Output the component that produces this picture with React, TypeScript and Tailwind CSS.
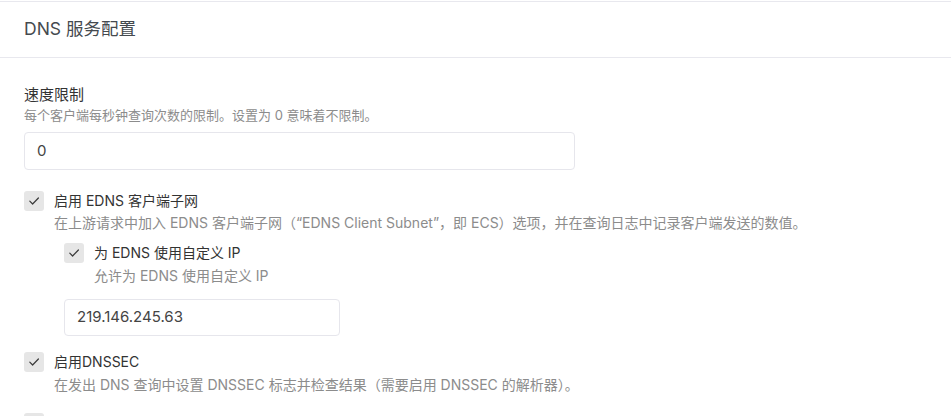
import React from "react";

const font = { fontFamily: 'Inter, "Noto Sans CJK SC", sans-serif' };

function Check() {
  return (
    <div className="flex h-5 w-5 shrink-0 items-center justify-center rounded-[3px] bg-[#e6e6e6]">
      <svg width="12" height="12" viewBox="0 0 12 12" fill="none">
        <path d="M1.8 6.2 L4.6 9 L10.4 3" stroke="#3a3a3a" strokeWidth="1.2" strokeLinecap="round" strokeLinejoin="round" />
      </svg>
    </div>
  );
}

function CheckRow({ label, desc, descMt }: { label: string; desc: string; descMt: string }) {
  return (
    <div className="flex gap-[10px]">
      <Check />
      <div className="flex flex-col">
        <div className="text-[14px] leading-5 text-[#333]">{label}</div>
        <div className={`text-[14px] leading-5 text-[#8c8c8c] ${descMt}`}>{desc}</div>
      </div>
    </div>
  );
}

export default function App() {
  return (
    <div className="h-[416px] w-full overflow-hidden bg-white pt-px" style={font}>
      <div className="border-t border-[#e8e8ee]">
        <div className="flex h-[56px] items-center border-b border-[#e8e8ee] px-6">
          <span className="text-[17.5px] text-[#454a4f]">DNS 服务配置</span>
        </div>
        <div className="px-6 pt-[26px]">
          <div className="text-[15px] leading-[22px] text-[#333]">速度限制</div>
          <div className="text-[13px] leading-[18px] text-[#8c8c8c]">每个客户端每秒钟查询次数的限制。设置为 0 意味着不限制。</div>
          <div className="mt-[8px] flex h-[38px] w-[551px] items-center rounded-[4px] border border-[#e6e6ec] px-3 text-[15px] text-[#444]">0</div>

          <div className="mt-[21px]">
            <CheckRow
              label="启用 EDNS 客户端子网"
              desc="在上游请求中加入 EDNS 客户端子网（“EDNS Client Subnet”，即 ECS）选项，并在查询日志中记录客户端发送的数值。"
              descMt="mt-[2px]"
            />
          </div>
          <div className="mt-[10px] pl-10">
            <CheckRow label="为 EDNS 使用自定义 IP" desc="允许为 EDNS 使用自定义 IP" descMt="mt-[3px]" />
            <div className="mt-[13px] flex h-[37px] w-[276px] items-center rounded-[4px] border border-[#e6e6ec] px-3 text-[15px] text-[#444]">
              219.146.245.63
            </div>
          </div>
          <div className="mt-[16px]">
            <CheckRow
              label="启用DNSSEC"
              desc="在发出 DNS 查询中设置 DNSSEC 标志并检查结果（需要启用 DNSSEC 的解析器）。"
              descMt="mt-[3px]"
            />
          </div>
          <div className="mt-[18px]">
            <Check />
          </div>
        </div>
      </div>
    </div>
  );
}
